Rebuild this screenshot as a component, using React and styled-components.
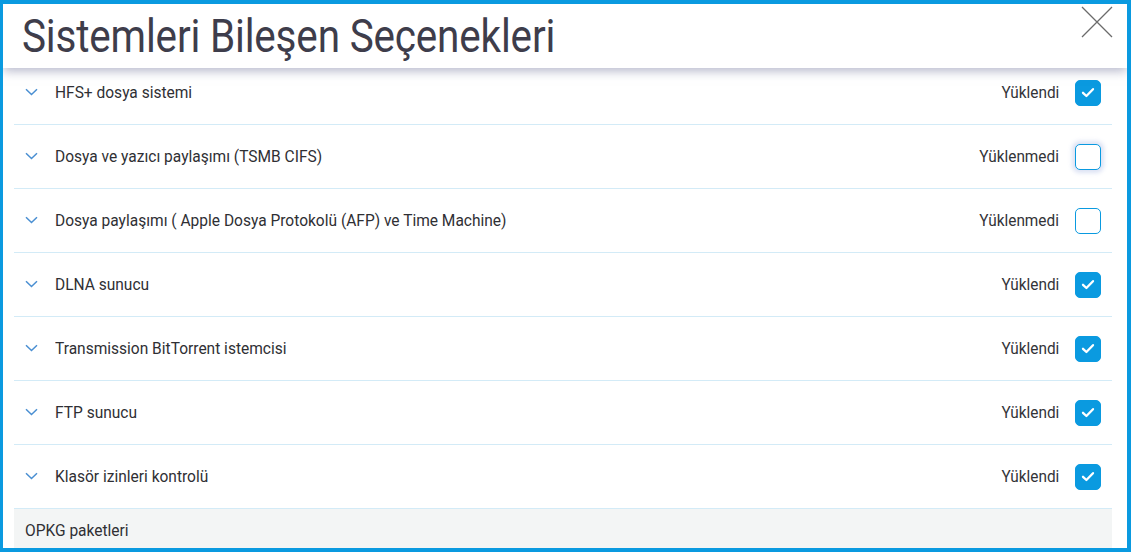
import styled, { createGlobalStyle } from "styled-components";

const GlobalStyle = createGlobalStyle`
  html, body {
    margin: 0;
    padding: 0;
    background: #ffffff;
  }
  * {
    box-sizing: border-box;
  }
`;

const Frame = styled.div`
  width: 1131px;
  height: 552px;
  border: 4px solid #0a9ae0;
  border-left-width: 3px;
  background: #ffffff;
  display: flex;
  flex-direction: column;
  overflow: hidden;
  font-family: Roboto, "Liberation Sans", sans-serif;
`;

const Header = styled.header`
  position: relative;
  z-index: 2;
  height: 64px;
  flex: none;
  display: flex;
  align-items: center;
  justify-content: space-between;
  padding: 0 14px 0 19px;
  background: #ffffff;
  box-shadow: 0 3px 10px rgba(120, 124, 160, 0.55);
`;

const Title = styled.h1`
  margin: 0;
  margin-top: -1px;
  font-size: 46px;
  font-weight: 400;
  color: #3e3d4b;
  letter-spacing: -0.2px;
  transform: scaleX(0.88);
  transform-origin: left center;
  white-space: nowrap;
`;

const CloseButton = styled.button`
  border: none;
  background: none;
  padding: 0;
  width: 32px;
  height: 32px;
  align-self: flex-start;
  margin-top: 2px;
  cursor: pointer;
`;

const Body = styled.div`
  flex: 1;
  overflow: hidden;
  padding: 0 15px 0 11px;
`;

const List = styled.ul`
  list-style: none;
  margin: -7px 0 0;
  padding: 0;
`;

const Row = styled.li`
  height: 64px;
  display: flex;
  align-items: center;
  padding: 0 11px 0 11px;
  border-bottom: 1px solid #d3ebf7;
  font-size: 16px;
  color: #2f2f34;
`;

const Chevron = styled.span`
  width: 14px;
  display: flex;
  align-items: center;
  margin-right: 16px;
  margin-top: -2px;
`;

const Label = styled.span`
  flex: 1;
  margin-top: -1px;
  transform: scaleX(0.97);
  transform-origin: left center;
  white-space: nowrap;
`;

const Status = styled.span`
  margin-right: 16px;
  margin-top: -1px;
  color: #333338;
  transform: scaleX(0.96);
  transform-origin: right center;
`;

const Box = styled.span`
  width: 26px;
  height: 26px;
  border-radius: 5px;
  display: flex;
  align-items: center;
  justify-content: center;
  background: ${(p) => (p.$checked ? "#0a9ae0" : "#ffffff")};
  border: 1px solid #0a9ae0;
  box-shadow: ${(p) =>
    p.$focused ? "0 0 4px 3px rgba(140, 160, 220, 0.3)" : "none"};
`;

const Section = styled.div`
  background: #f3f5f5;
  height: 48px;
  padding: 12px 11px 0;
  font-size: 16px;
  color: #2f2f34;
  border-top: 1px solid #d3ebf7;
  margin-top: -1px;
`;

const SectionLabel = styled.span`
  display: inline-block;
  transform: scaleX(0.97);
  transform-origin: left center;
`;

const items = [
  { label: "HFS+ dosya sistemi", installed: true },
  { label: "Dosya ve yazıcı paylaşımı (TSMB CIFS)", installed: false, focused: true },
  {
    label: "Dosya paylaşımı ( Apple Dosya Protokolü (AFP) ve Time Machine)",
    installed: false,
  },
  { label: "DLNA sunucu", installed: true },
  { label: "Transmission BitTorrent istemcisi", installed: true },
  { label: "FTP sunucu", installed: true },
  { label: "Klasör izinleri kontrolü", installed: true },
];

const ChevronIcon = () => (
  <svg width="13" height="8" viewBox="0 0 13 8">
    <path d="M1 1.2 L6.5 6.5 L12 1.2" fill="none" stroke="#4a8fd2" strokeWidth="1.5" />
  </svg>
);

const CheckIcon = () => (
  <svg width="14" height="11" viewBox="0 0 14 11">
    <path
      d="M2 5.8 L5.4 9 L12 2.2"
      fill="none"
      stroke="#ffffff"
      strokeWidth="2.3"
      strokeLinecap="round"
      strokeLinejoin="round"
    />
  </svg>
);

const CloseIcon = () => (
  <svg width="32" height="32" viewBox="0 0 32 32">
    <path d="M1 1 L31 31 M31 1 L1 31" stroke="#6b6b6b" strokeWidth="1.3" />
  </svg>
);

export default function App() {
  return (
    <>
      <GlobalStyle />
      <Frame>
        <Header>
          <Title>Sistemleri Bileşen Seçenekleri</Title>
          <CloseButton aria-label="Kapat">
            <CloseIcon />
          </CloseButton>
        </Header>
        <Body>
          <List>
            {items.map((item) => (
              <Row key={item.label}>
                <Chevron>
                  <ChevronIcon />
                </Chevron>
                <Label>{item.label}</Label>
                <Status>{item.installed ? "Yüklendi" : "Yüklenmedi"}</Status>
                <Box $checked={item.installed} $focused={item.focused}>
                  {item.installed && <CheckIcon />}
                </Box>
              </Row>
            ))}
          </List>
          <Section>
            <SectionLabel>OPKG paketleri</SectionLabel>
          </Section>
        </Body>
      </Frame>
    </>
  );
}
